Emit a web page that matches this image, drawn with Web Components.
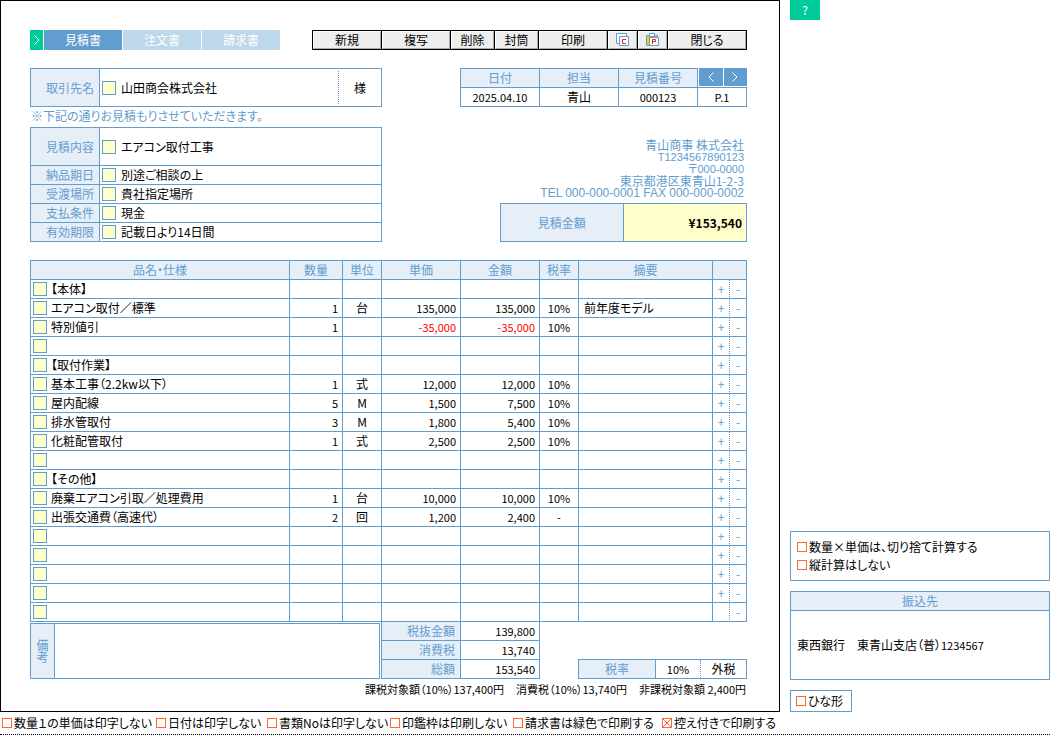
<!DOCTYPE html>
<html lang="ja">
<head>
<meta charset="utf-8">
<title>見積書</title>
<style>
body {
  margin: 0;
  background: #fff;
  color: #000;
  font: 12px/18px "Noto Sans CJK JP", "Liberation Sans", sans-serif;
  font-feature-settings: "palt";
  --line: #619dce;
  --head: #e6eef8;
  --pick: #ffffcc;
  --go: #00cc99;
  --tick: #ff6633;
  --num: 11px;
}
</style>
</head>
<body>
<quote-page></quote-page>

<script>
const base = `
  *, *::before, *::after { box-sizing: border-box; }
  :host { display: block; }
  button, input, textarea { font: inherit; font-feature-settings: inherit; color: inherit; margin: 0; padding: 0; border: 0; border-radius: 0; }
  button { cursor: pointer; }
  table { border-collapse: separate; border-spacing: 0; table-layout: fixed; width: 100%; }
  th, td { padding: 0; height: 19px; border: 0 solid var(--line); border-width: 0 1px 1px 0; font-weight: 400; white-space: nowrap; line-height: 18px; }
  th { background: var(--head); color: var(--line); }
`;

function define(name, css, html) {
  customElements.define(name, class extends HTMLElement {
    constructor() {
      super();
      const t = document.createElement('template');
      t.innerHTML = `<style>${base}${css}</style>${typeof html === 'function' ? html(this) : html}`;
      this.attachShadow({ mode: 'open' }).append(t.content.cloneNode(true));
    }
  });
}

const chevron = (d, s) => `<svg width="${s}" height="${s + 2}" viewBox="0 0 8 10" fill="none" stroke="#fff" aria-hidden="true"><path d="${d}"/></svg>`;
const right = 'M1.500 .5L6 5L1.500 9.500';
const left = 'M6.500 .5L2 5L6.500 9.500';

define('pick-button', `
  :host { width: 14px; height: 14px; flex: none; }
  button { display: block; width: 100%; height: 100%; border: 1px solid var(--line); background: var(--pick); }
`, '<button type="button" aria-label="選択"></button>');

/* Tick box with its label */
define('tick-box', `
  label { display: flex; align-items: center; gap: 2px; white-space: nowrap; }
  input { appearance: none; flex: none; width: 10px; height: 10px; border: 1px solid var(--tick); background: #fff; }
  input:checked { background:
    linear-gradient(45deg, transparent 46%, var(--tick) 46%, var(--tick) 54%, transparent 54%),
    linear-gradient(135deg, transparent 46%, var(--tick) 46%, var(--tick) 54%, transparent 54%); }
`, el => `<label><input type="checkbox"${el.hasAttribute('checked') ? ' checked' : ''}><span><slot></slot></span></label>`);

define('doc-tabs', `
  nav { display: flex; gap: 1px; height: 20px; color: #fff; }
  .mark { width: 13px; background: var(--go); display: grid; place-items: center; }
  a { width: 78px; background: #bdd7eb; color: inherit; text-decoration: none; text-align: center; line-height: 19px; }
  a[aria-current] { background: var(--line); }
`, `<nav><span class="mark">${chevron(right, 8)}</span>
  <a href="#estimate" aria-current="page">見積書</a><a href="#order">注文書</a><a href="#invoice">請求書</a></nav>`);

define('command-bar', `
  div { display: flex; gap: 1px; height: 20px; padding: 1px; background: #000; }
  button { width: 68px; background: #eee; border: 1px solid; border-color: #fff #aaa #aaa #fff; line-height: 16px; display: grid; place-items: center; }
  .short { width: 43px; } .icon { width: 29px; } .wide { width: 78px; }
`, `<div>
  <button type="button">新規</button><button type="button">複写</button>
  <button type="button" class="short">削除</button><button type="button" class="short">封筒</button>
  <button type="button">印刷</button>
  <button type="button" class="icon" aria-label="コピー"><svg width="14" height="14" viewBox="0 0 14 14" fill="#fff" stroke="#619dce"><path d="M.5 .5h10v10h-10z"/><path d="M3.500 3.500h9v9h-9z"/><path d="M10 6.500H6.500v4H10" fill="none" stroke="#e22"/></svg></button>
  <button type="button" class="icon" aria-label="貼り付け"><svg width="14" height="14" viewBox="0 0 14 14"><path d="M.5 2.500h11v10H.5z" fill="#fc0" stroke="#619dce"/><path d="M3.500 .5h5v3h-5z" fill="#fff" stroke="#619dce"/><path d="M3.500 4.500h9v8h-9z" fill="#fff" stroke="#619dce"/><path d="M6.500 11V6.500h3v2h-3" fill="none" stroke="#e22"/></svg></button>
  <button type="button" class="wide">閉じる</button></div>`);

define('client-box', `
  section { display: flex; height: 39px; border: 1px solid var(--line); line-height: 37px; white-space: nowrap; }
  .label { width: 69px; padding-right: 5px; text-align: right; background: var(--head); color: var(--line); border-right: 1px solid var(--line); }
  .name { flex: 1; display: flex; align-items: center; gap: 5px; padding-left: 2px; }
  .title { width: 43px; margin: 2px 0; line-height: 33px; text-align: center; border-left: 1px dotted var(--line); }
`, `<section><span class="label">取引先名</span><span class="name"><pick-button></pick-button>山田商会株式会社</span><span class="title">様</span></section>`);

const terms = [['見積内容', 'エアコン取付工事'], ['納品期日', '別途ご相談の上'], ['受渡場所', '貴社指定場所'], ['支払条件', '現金'], ['有効期限', '記載日より14日間']];
define('terms-table', `
  table { border: solid var(--line); border-width: 1px 0 0 1px; }
  th { width: 69px; text-align: right; padding-right: 5px; }
  tr:first-child > * { height: 38px; }
  td div { display: flex; align-items: center; gap: 5px; padding-left: 2px; }
`, `<table>${terms.map(([k, v]) => `<tr><th scope="row">${k}</th><td><div><pick-button></pick-button>${v}</div></td></tr>`).join('')}</table>`);

define('quote-meta', `
  table { border-left: 1px solid var(--line); text-align: center; }
  th { height: 20px; border-top-width: 1px; }
  th, td { width: 79px; }
  .num { font-size: var(--num); }
  .nav { width: 49px; height: 20px; border-right: 0; vertical-align: top; }
  .nav div { display: flex; gap: 1px; height: 18px; margin-left: 1px; }
  .nav button { flex: 1; background: var(--line); display: grid; place-items: center; }
`, `<table>
  <tr><th scope="col">日付</th><th scope="col">担当</th><th scope="col">見積番号</th>
  <td class="nav"><div><button type="button" aria-label="前へ">${chevron(left, 8)}</button><button type="button" aria-label="次へ">${chevron(right, 8)}</button></div></td></tr>
  <tr><td class="num">2025.04.10</td><td>青山</td><td class="num">000123</td><td class="num">P.1</td></tr></table>`);

define('company-info', `
  address { font-style: normal; color: var(--line); text-align: right; line-height: 12px; padding-right: 3px; white-space: nowrap; }
  div { height: 12px; }
  .num { font-family: "Liberation Sans", "Noto Sans CJK JP", sans-serif; font-size: var(--num); }
  .tel { font-family: "Liberation Sans", sans-serif; }
`, `<address><div>青山商事 株式会社</div><div class="num">T1234567890123</div><div class="num">〒000-0000</div><div>東京都港区東青山1-2-3</div><div class="tel">TEL 000-000-0001 FAX 000-000-0002</div></address>`);

define('amount-box', `
  section { display: grid; grid-template-columns: 1fr 1fr; height: 39px; border: 1px solid var(--line); line-height: 37px; }
  .label { text-align: center; background: var(--head); color: var(--line); border-right: 1px solid var(--line); }
  .value { text-align: right; padding-right: 4px; background: var(--pick); font-weight: 700; }
`, `<section><span class="label">見積金額</span><span class="value">¥153,540</span></section>`);

const items = [
  ['【本体】'],
  ['エアコン取付／標準', '1', '台', '135,000', '135,000', '10%', '前年度モデル'],
  ['特別値引', '1', '', '-35,000', '-35,000', '10%'],
  [],
  ['【取付作業】'],
  ['基本工事（2.2kw以下）', '1', '式', '12,000', '12,000', '10%'],
  ['屋内配線', '5', 'M', '1,500', '7,500', '10%'],
  ['排水管取付', '3', 'M', '1,800', '5,400', '10%'],
  ['化粧配管取付', '1', '式', '2,500', '2,500', '10%'],
  [],
  ['【その他】'],
  ['廃棄エアコン引取／処理費用', '1', '台', '10,000', '10,000', '10%'],
  ['出張交通費（高速代）', '2', '回', '1,200', '2,400', '-'],
  [], [], [], [], []
];
const itemRow = ([name = '', qty = '', unit = '', price = '', sum = '', tax = '', memo = ''], i) => {
  const money = v => `<td class="n${v[0] === '-' ? ' neg' : ''}">${v}</td>`;
  const add = i < items.length - 1 ? '<button type="button">+</button>' : '';
  return `<tr><td><div class="name"><pick-button></pick-button>${name}</div></td>${money(qty)}<td class="c">${unit}</td>${money(price)}${money(sum)}<td class="c small">${tax}</td><td class="memo">${memo}</td><td class="add">${add}</td><td class="del"><button type="button">-</button></td></tr>`;
};
define('item-table', `
  table { border: solid var(--line); border-width: 1px 0 0 1px; }
  .name { display: flex; align-items: center; gap: 4px; padding-left: 2px; }
  .n { text-align: right; padding-right: 4px; font-size: var(--num); }
  .neg { color: #f00; }
  .c { text-align: center; }
  .small { font-size: var(--num); }
  .memo { padding-left: 5px; }
  .add { border-right-style: dotted; }
  .add button, .del button { display: block; width: 100%; height: 18px; line-height: 16px; background: none; color: var(--line); }
  .w17 { width: 17px; } .w39 { width: 39px; } .w53 { width: 53px; } .w79 { width: 79px; } .w134 { width: 134px; }
`, `<table><colgroup><col><col class="w53"><col class="w39"><col class="w79"><col class="w79"><col class="w39"><col class="w134"><col class="w17"><col class="w17"></colgroup>
  <thead><tr><th scope="col">品名・仕様</th><th scope="col">数量</th><th scope="col">単位</th><th scope="col">単価</th><th scope="col">金額</th><th scope="col">税率</th><th scope="col">摘要</th><th colspan="2"></th></tr></thead>
  <tbody>${items.map(itemRow).join('')}</tbody></table>`);

define('quote-foot', `
  .grid { display: grid; grid-template-columns: minmax(0, 1fr) 159px 38px 169px; }
  .remarks { display: flex; margin: 1px 1px 0 0; border: 1px solid var(--line); }
  .remarks label { width: 24px; flex: none; writing-mode: vertical-rl; text-align: center; line-height: 23px; background: var(--head); color: var(--line); border-right: 1px solid var(--line); }
  textarea { flex: 1; min-width: 0; height: 54px; resize: none; background: none; }
  .totals { border-left: 1px solid var(--line); text-align: right; }
  .totals th { padding-right: 5px; } .totals td { padding-right: 4px; font-size: var(--num); }
  .tax { grid-column: 4; align-self: end; display: flex; height: 20px; border: 1px solid var(--line); text-align: center; line-height: 18px; }
  .tax .label { flex: 1; background: var(--head); color: var(--line); border-right: 1px solid var(--line); }
  .tax .rate { width: 45px; border-right: 1px dotted var(--line); font-size: var(--num); } .tax .kind { width: 45px; }
  p { margin: 0; display: flex; justify-content: flex-end; gap: 12px; font-size: var(--num); line-height: 20px; padding-right: 1px; white-space: nowrap; }
`, `<div class="grid">
  <div class="remarks"><label for="remarks">備考</label><textarea id="remarks"></textarea></div>
  <table class="totals"><tr><th scope="row">税抜金額</th><td>139,800</td></tr><tr><th scope="row">消費税</th><td>13,740</td></tr><tr><th scope="row">総額</th><td>153,540</td></tr></table>
  <div class="tax"><span class="label">税率</span><span class="rate">10%</span><span class="kind">外税</span></div></div>
  <p><span>課税対象額（10%）137,400円</span><span>消費税（10%）13,740円</span><span>非課税対象額 2,400円</span></p>`);

define('quote-sheet', `
  :host { border: 1px solid #000; padding: 29px 32px 12px 29px; }
  .bar { display: flex; justify-content: space-between; }
  .top { display: grid; grid-template-columns: minmax(0, 1fr) 287px; column-gap: 78px; margin: 18px 0; }
  .note { margin: 0; padding: 0 1px; height: 20px; line-height: 18px; color: var(--line); white-space: nowrap; }
  .right { display: flex; flex-direction: column; justify-content: space-between; }
  .sum { display: flex; flex-direction: column; gap: 4px; }
  amount-box { width: 247px; align-self: flex-end; }
`, `<div class="bar"><doc-tabs></doc-tabs><command-bar></command-bar></div>
  <div class="top">
    <div><client-box></client-box><p class="note">※下記の通りお見積もりさせていただきます。</p><terms-table></terms-table></div>
    <div class="right"><quote-meta></quote-meta><div class="sum"><company-info></company-info><amount-box></amount-box></div></div>
  </div>
  <item-table></item-table><quote-foot></quote-foot>`);

define('side-panel', `
  :host { display: flex; flex-direction: column; align-items: stretch; gap: 10px; }
  .help { width: 30px; height: 20px; background: var(--go); color: #fff; line-height: 20px; text-align: center; text-decoration: none; }
  section { border: 1px solid var(--line); }
  .calc { margin-top: auto; padding: 6px; height: 50px; }
  h2 { margin: 0; height: 19px; font-size: 12px; font-weight: 400; text-align: center; line-height: 18px; background: var(--head); color: var(--line); border-bottom: 1px solid var(--line); }
  .bank p { margin: 0; padding: 0 6px; line-height: 68px; white-space: nowrap; }
  .num { font-size: var(--num); }
  .form { align-self: flex-start; padding: 1px 6px 1px 5px; min-width: 62px; height: 22px; }
`, `<a class="help" href="#help">?</a>
  <section class="calc"><tick-box>数量×単価は、切り捨て計算する</tick-box><tick-box>縦計算はしない</tick-box></section>
  <section class="bank"><h2>振込先</h2><p>東西銀行　東青山支店（普）<span class="num">1234567</span></p></section>
  <section class="form"><tick-box>ひな形</tick-box></section>`);

define('print-options', `
  :host { padding: 2px 2px 4px; border-bottom: 1px dotted #000; }
  div { display: grid; grid-template-columns: 154px 111px 123px 123px 149px auto; justify-content: start; height: 16px; align-items: center; }
`, `<div><tick-box>数量１の単価は印字しない</tick-box><tick-box>日付は印字しない</tick-box><tick-box>書類Noは印字しない</tick-box><tick-box>印鑑枠は印刷しない</tick-box><tick-box>請求書は緑色で印刷する</tick-box><tick-box checked>控え付きで印刷する</tick-box></div>`);

define('quote-page', `
  main { display: grid; grid-template-columns: minmax(0, 3fr) minmax(0, 1fr); column-gap: 10px; }
`, `<main><quote-sheet></quote-sheet><side-panel></side-panel></main><print-options></print-options>`);
</script>
</body>
</html>
